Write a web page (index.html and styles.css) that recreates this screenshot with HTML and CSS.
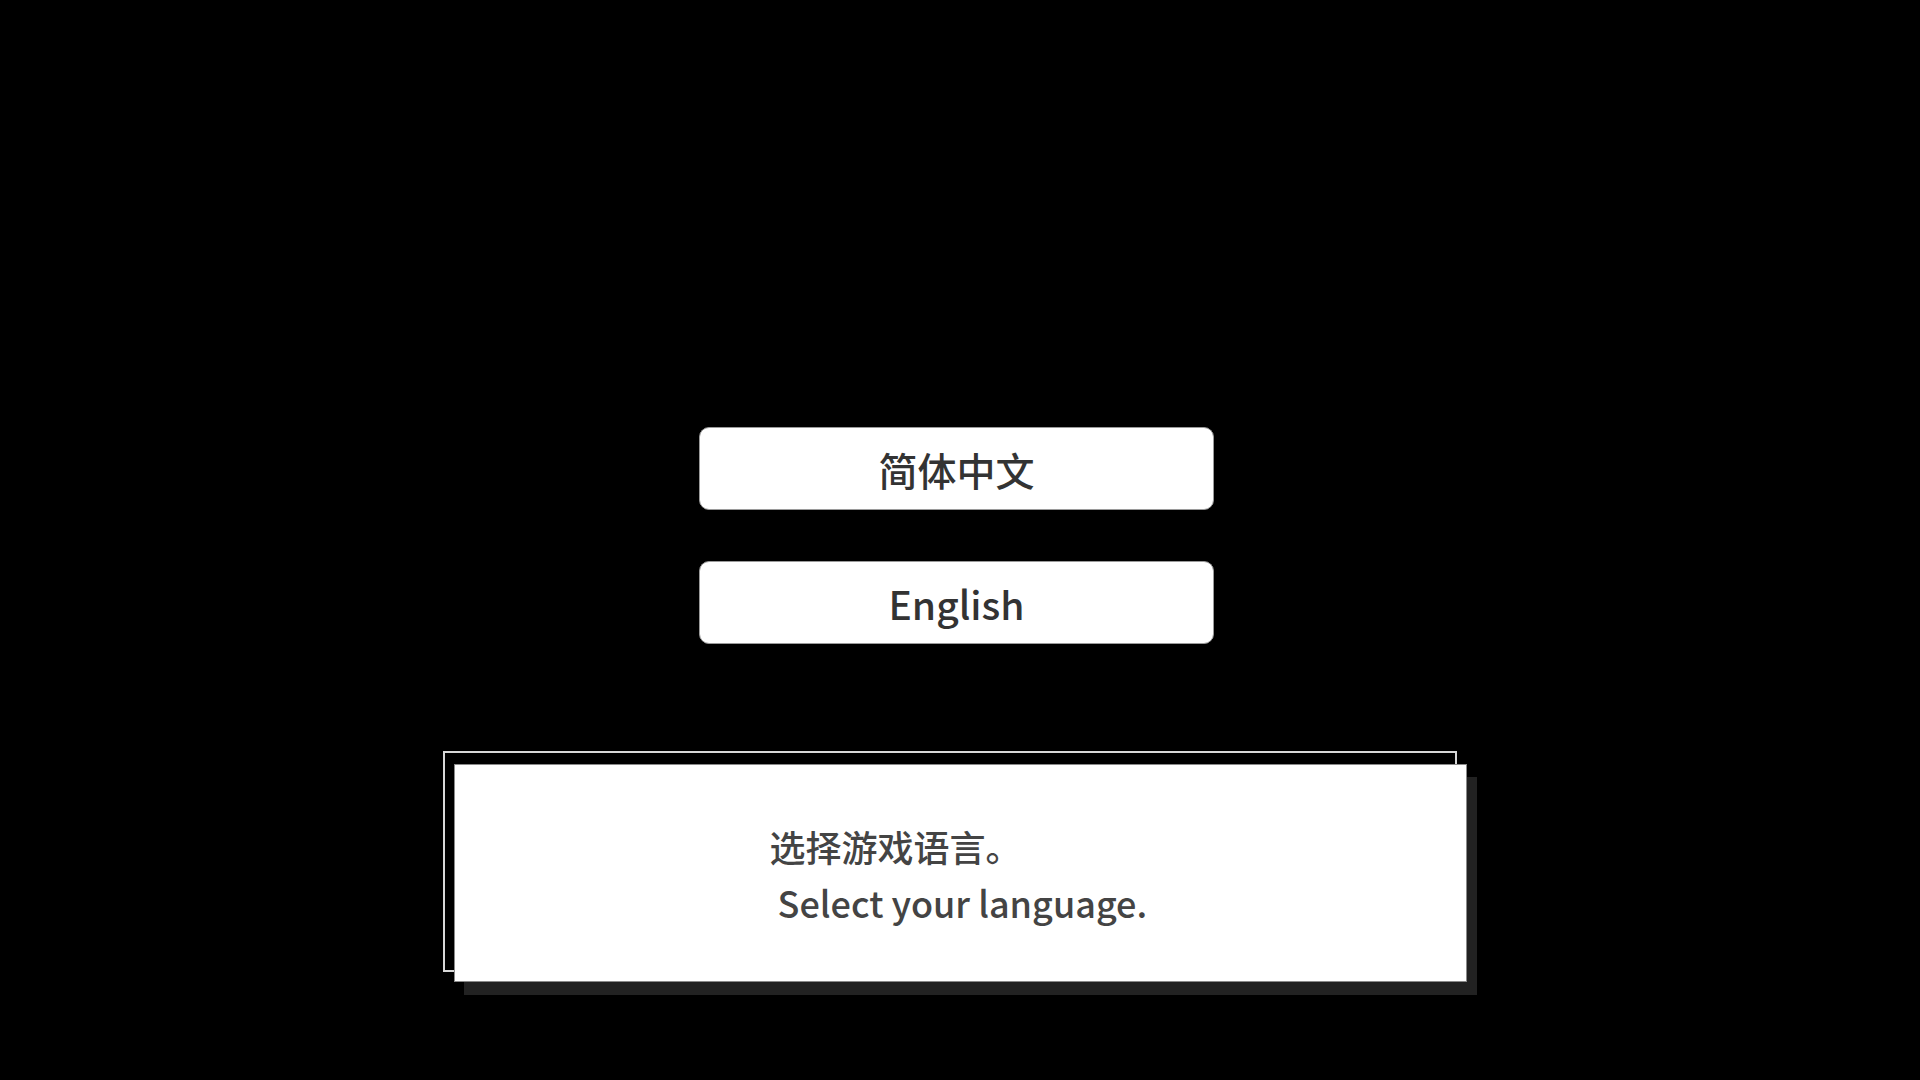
FILE: index.html
```html
<!DOCTYPE html>
<html lang="zh-CN">
<head>
  <meta charset="UTF-8" />
  <meta name="viewport" content="width=device-width, initial-scale=1.0"/>
  <title>Language</title>
  <link rel="stylesheet" href="styles.css">
</head>
<body>

  <div class="lang-list">
    <button class="lang-btn">简体中文</button>
    <button class="lang-btn">English</button>
  </div>

  <div class="dialog">
    <div class="dialog-box">
      <p class="line">选择游戏语言。</p>
      <p class="line"> Select your language.</p>
    </div>
  </div>

</body>
</html>
```

FILE: styles.css
```css
body {
  font-family: "Noto Sans CJK SC", "Noto Sans", sans-serif;
  background: #000;
  margin: 0;
  height: 100vh;
  padding-top: 427px;
  box-sizing: border-box;
}

.lang-list {
  display: flex;
  flex-direction: column;
  align-items: center;
  gap: 51px;
  padding-right: 7px;
}

.lang-btn {
  width: 515px;
  height: 83px;
  background: #fff;
  border: 1px solid #9a9a9a;
  border-radius: 10px;
  font-family: inherit;
  font-size: 39px;
  font-weight: 500;
  color: #333;
  padding: 0;
  cursor: pointer;
}

.dialog {
  position: relative;
  width: 1013px;
  margin: 107px auto 0;
  padding-top: 13px;
}

/* thin frame sitting behind the box */
.dialog::before {
  content: "";
  position: absolute;
  left: -11px;
  top: 0;
  width: 1014px;
  height: 221px;
  border: 2px solid #d8d8d8;
  box-sizing: border-box;
}

.dialog-box {
  position: relative;
  height: 218px;
  background: #fff;
  border: 1px solid #8a8a8a;
  box-sizing: border-box;
  box-shadow: 10px 13px 0 #222;
  padding: 53px 0 0 315px;
}

.line {
  margin: 0;
  font-size: 36px;
  font-weight: 500;
  line-height: 56px;
  color: #444;
  white-space: pre;
}
```
